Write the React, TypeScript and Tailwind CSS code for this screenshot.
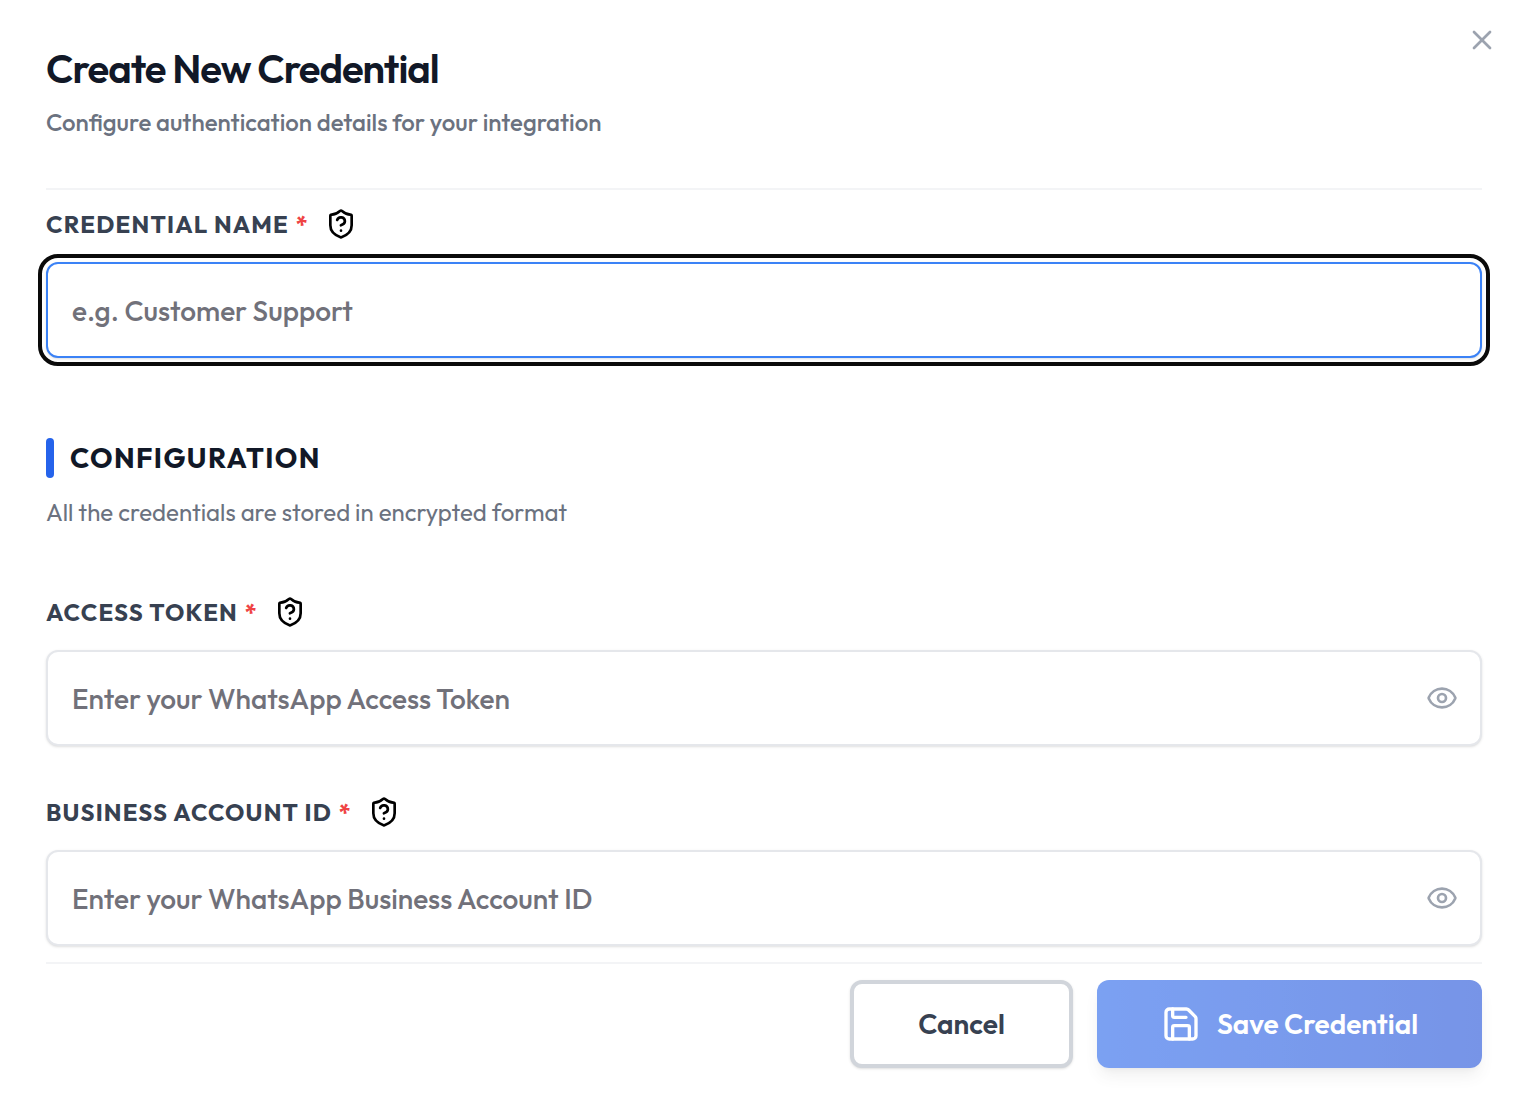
import { useState } from "react";
import { Eye, EyeOff, Save, ShieldQuestionMark, X } from "lucide-react";

interface FieldProps {
  id: string;
  label: string;
  placeholder: string;
  secret?: boolean;
  autoFocus?: boolean;
}

function Field({ id, label, placeholder, secret = false, autoFocus = false }: FieldProps) {
  const [value, setValue] = useState("");
  const [visible, setVisible] = useState(false);

  return (
    <div>
      <div className="flex h-8 items-center gap-4">
        <label htmlFor={id} className="text-2xl font-bold tracking-wider text-[#374151] uppercase">
          {label} <span className="ml-px text-[#ef4444]">*</span>
        </label>
        <button type="button" aria-label={`Help for ${label}`} className="text-black">
          <ShieldQuestionMark className="size-8" />
        </button>
      </div>
      <div className="relative mt-[22px]">
        <input
          id={id}
          type={secret && !visible ? "password" : "text"}
          value={value}
          onChange={(e) => setValue(e.target.value)}
          placeholder={placeholder}
          autoFocus={autoFocus}
          className="block h-24 w-full rounded-xl border-2 border-[#e5e7eb] bg-white px-6 text-[28px] font-medium text-[#111827] shadow-sm outline-4 outline-offset-4 outline-transparent placeholder:text-[#71717a] focus:border-[#3b82f6] focus:outline-[#0a0a0a]"
        />
        {secret && (
          <button
            type="button"
            onClick={() => setVisible(!visible)}
            aria-label={visible ? "Hide value" : "Show value"}
            className="absolute inset-y-0 right-6 text-[#9ca3af]"
          >
            {visible ? <EyeOff className="size-8" /> : <Eye className="size-8" />}
          </button>
        )}
      </div>
    </div>
  );
}

export default function App() {
  return (
    <form
      onSubmit={(e) => e.preventDefault()}
      className="relative bg-white pt-11 pr-10 pb-12 pl-[46px] font-['Outfit','Lato','Liberation_Sans',sans-serif] antialiased"
    >
      <button type="button" aria-label="Close" className="absolute top-6 right-6 text-[#9ca3af]">
        <X className="size-8" />
      </button>
      <header className="border-b-2 border-[#f3f4f6] pb-[50px]">
        <h1 className="text-[40px] leading-[48px] font-semibold tracking-tight text-[#111827]">Create New Credential</h1>
        <p className="mt-3.5 text-2xl font-medium text-[#6b7280]">
          Configure authentication details for your integration
        </p>
      </header>

      <div className="pt-[18px]">
        <Field id="name" label="Credential Name" placeholder="e.g. Customer Support" autoFocus />
      </div>

      <section className="mt-20">
        <h2 className="flex items-center gap-4 text-[28px] leading-10 font-bold tracking-wider text-[#111827] uppercase">
          <span className="h-10 w-2 rounded-full bg-[#2563eb]" />
          Configuration
        </h2>
        <p className="mt-[18px] text-2xl text-[#6b7280]">All the credentials are stored in encrypted format</p>
        <div className="mt-[68px] space-y-[50px]">
          <Field id="token" label="Access Token" placeholder="Enter your WhatsApp Access Token" secret />
          <Field id="account" label="Business Account ID" placeholder="Enter your WhatsApp Business Account ID" secret />
        </div>
      </section>

      <footer className="mt-4 flex justify-end gap-6 border-t-2 border-[#f3f4f6] pt-4">
        <button
          type="button"
          className="h-[88px] w-[223px] rounded-xl border-4 border-[#d1d5db] bg-white text-[28px] font-semibold text-[#374151] shadow-sm"
        >
          Cancel
        </button>
        <button
          type="submit"
          disabled
          className="flex h-[88px] w-[385px] items-center justify-center gap-4 rounded-xl bg-linear-to-r from-[#2563eb] to-[#1d4ed8] text-[28px] font-semibold text-white opacity-60 shadow-lg"
        >
          <Save className="size-10" />
          Save Credential
        </button>
      </footer>
    </form>
  );
}
